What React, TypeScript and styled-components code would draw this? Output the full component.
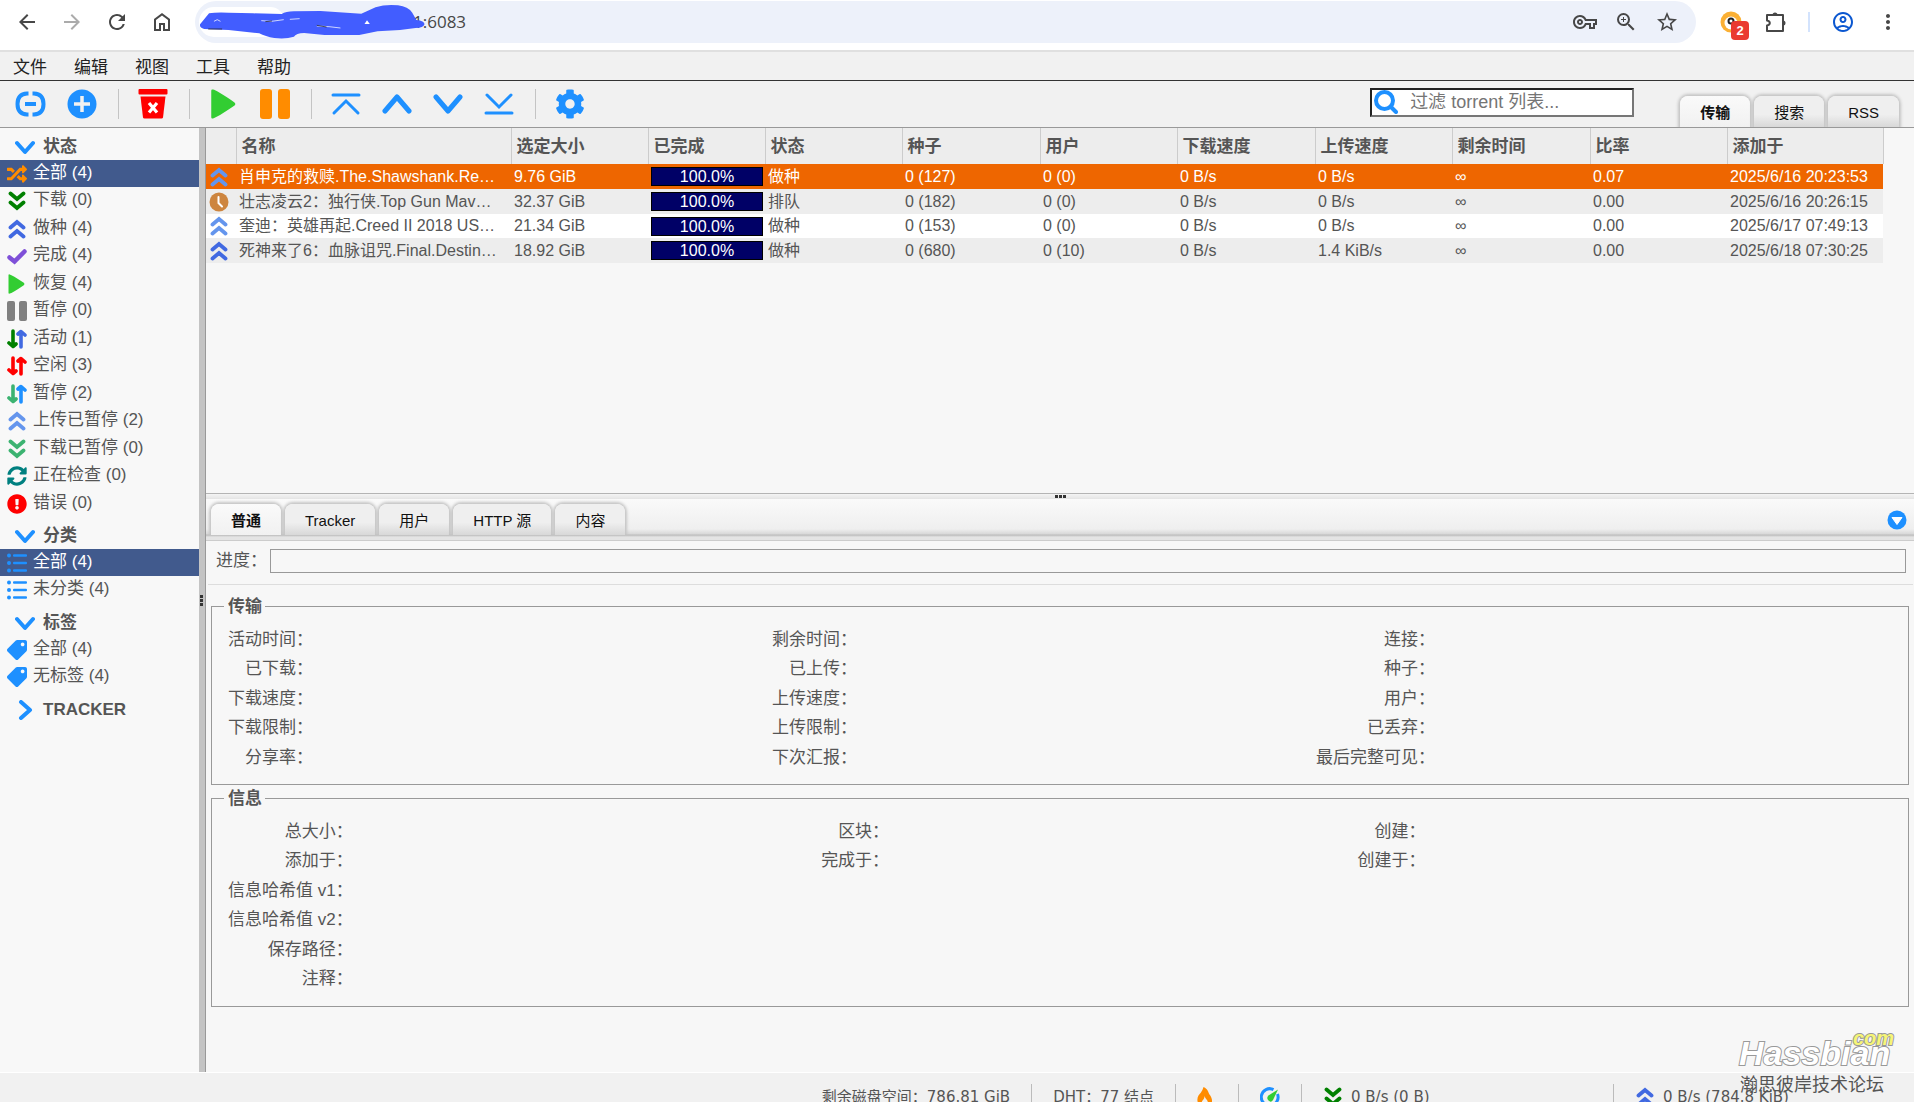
import React, { useState } from "react";
import styled, { createGlobalStyle, css } from "styled-components";
import {
  MdArrowBack,
  MdArrowForward,
  MdRefresh,
  MdOutlineVpnKey,
  MdZoomIn,
  MdStarOutline,
  MdOutlineAccountCircle,
  MdMoreVert,
} from "react-icons/md";
import { FaRandom, FaSyncAlt, FaExclamationCircle, FaTag, FaCog } from "react-icons/fa";

const sans = '"Liberation Sans", "Noto Sans CJK SC", sans-serif';
const blue = "#1e90ff";

const Global = createGlobalStyle`
  *, *::before, *::after { box-sizing: border-box; }
  body { margin: 0; background: #f7f7f7; color: #555; font: 17px/20px ${sans}; }
  button { border: 0; padding: 0; margin: 0; background: none; color: inherit; font: inherit; cursor: pointer; }
  a { color: inherit; text-decoration: none; }
  ul, h2, dl, dd, dt { margin: 0; padding: 0; list-style: none; font: inherit; }
  svg { display: block; flex: none; }
`;

/* ---------- icons ---------- */

const Chevron = ({ dir, size = 20, color = blue }: { dir: "up" | "down" | "right"; size?: number; color?: string }) => {
  const points = { up: "3,15 10,5 17,15", down: "2,6 10,15 18,6", right: "6,2 15,10 6,18" }[dir];
  return (
    <svg width={size} height={size} viewBox="0 0 20 20" fill="none" stroke={color} strokeWidth="4" strokeLinecap="round" strokeLinejoin="round">
      <polyline points={points} />
    </svg>
  );
};

const BigChevron = ({ up }: { up?: boolean }) => (
  <svg width="30" height="30" viewBox="0 0 30 30" fill="none" stroke={blue} strokeWidth="5" strokeLinecap="round" strokeLinejoin="round">
    <polyline points={up ? "3,22 15,8 27,22" : "3,8 15,22 27,8"} />
  </svg>
);

const EdgeChevron = ({ up }: { up?: boolean }) => (
  <svg width="30" height="30" viewBox="0 0 30 30" fill="none" stroke={blue} strokeWidth="3" strokeLinecap="round">
    {up ? <path d="M2 6h26M3 24 15 12l12 12" /> : <path d="M2 24h26M3 6l12 12L27 6" />}
  </svg>
);

const Double = ({ up, color, size = 20 }: { up?: boolean; color: string; size?: number }) => (
  <svg width={size} height={size} viewBox="0 0 20 20" fill="none" stroke={color} strokeWidth="3.8" strokeLinecap="round">
    {up ? (
      <path d="M3.5 8.5 10 3l6.500 5.500M3.500 17.500 10 12l6.500 5.500" />
    ) : (
      <path d="M3.500 2.500 10 8l6.500-5.500M3.500 11.500 10 17l6.500-5.500" />
    )}
  </svg>
);

const Traffic = ({ left, right }: { left: string; right: string }) => (
  <svg width="20" height="20" viewBox="0 0 20 20" fill="none" strokeWidth="3.6" strokeLinecap="round" strokeLinejoin="round">
    <path stroke={left} d="M6 2v15M2 14 6 17.500 9 15" />
    <path stroke={right} d="M14 18V3M11 5 14 2.500 18 6" />
  </svg>
);

const Check = () => (
  <svg width="20" height="20" viewBox="0 0 20 20" fill="none" stroke="#7f50d8" strokeWidth="4.500" strokeLinecap="round">
    <path d="M2.500 11.500 7.500 15.500 17.500 5.500" />
  </svg>
);

const Play = ({ size }: { size: number }) => (
  <svg width={size} height={size} viewBox="0 0 20 20" fill="#32cd32">
    <path d="M1.500 1.200Q1.500 0 2.700.400 5 .800 16.800 8.800 18.300 10 16.800 11.200 5 19.200 2.700 19.600 1.500 20 1.500 18.800Z" />
  </svg>
);

const Pause = ({ size, color }: { size: number; color: string }) => (
  <svg width={size} height={size} viewBox="0 0 20 20" fill={color}>
    <rect x="0" y="0" width="8" height="20" rx="2" />
    <rect x="12" y="0" width="8" height="20" rx="2" />
  </svg>
);

const Rows = () => (
  <svg width="20" height="20" viewBox="0 0 20 20" fill={blue}>
    <circle cx="2" cy="2.500" r="2" /><circle cx="2" cy="10" r="2" /><circle cx="2" cy="17.500" r="2" />
    <rect x="6" y="1.200" width="14" height="2.600" rx="1" /><rect x="6" y="8.700" width="14" height="2.600" rx="1" /><rect x="6" y="16.200" width="14" height="2.600" rx="1" />
  </svg>
);

const MirroredTag = styled(FaTag)`transform: scaleX(-1);`;
const Tag = () => <MirroredTag size={20} color={blue} />;

const LinkIcon = () => (
  <svg width="31" height="30" viewBox="0 0 31 30" fill="none" stroke={blue} strokeWidth="4">
    <path d="M13.500 4.500H12Q2.500 5 2.500 15T12 25.500h1.500M17.500 4.500H19Q28.500 5 28.500 15T19 25.500h-1.500" />
    <path d="M10 15h11" />
  </svg>
);

const PlusIcon = () => (
  <svg width="30" height="30" viewBox="0 0 30 30">
    <circle cx="15" cy="15" r="14.500" fill={blue} />
    <path d="M15 7v16M7 15h16" stroke="#f1f1f1" strokeWidth="3.500" />
  </svg>
);

const TrashIcon = () => (
  <svg width="30" height="30" viewBox="0 0 30 30" fill="#f00">
    <rect x="0.500" y="0" width="29" height="5.500" rx="1" />
    <path d="M2.500 7.500h25l-2.500 21q-.200 1-1.500 1h-17q-1.300 0-1.500-1z" />
    <path d="m11 14 8 9.500m0-9.500-8 9.500" stroke="#fff" strokeWidth="3.200" />
  </svg>
);

const SearchIcon = () => (
  <svg width="24" height="24" viewBox="0 0 24 24" fill="none" stroke={blue} strokeWidth="4" strokeLinecap="round">
    <circle cx="10.500" cy="10.500" r="8.500" />
    <path d="m17 17 5 5" />
  </svg>
);

const Clock = () => (
  <svg width="20" height="20" viewBox="0 0 20 20">
    <circle cx="10" cy="10" r="9.500" fill="#cd853f" />
    <path d="M9.500 5v6l3.500 3.500" fill="none" stroke="#fff" strokeWidth="2" strokeLinecap="round" />
  </svg>
);

const Flame = () => (
  <svg width="16" height="20" viewBox="0 0 16 20">
    <path fill="#ff8c00" d="M6.500 0C11 2 11 5 12.500 7.500 17 13 15.500 20 8 20S-1 13 1.500 8.500C3 6.500 5 5 6.500 0Z" />
    <path fill="#f1f1f1" d="M7.500 9c.500 3 4 4 3.500 8q-.500 3-3 3t-3.500-3C4.500 13 7.500 13 7.500 9Z" />
  </svg>
);

const Gauge = () => (
  <svg width="20" height="20" viewBox="0 0 20 20" fill="none">
    <path d="M13.500 2.600A8.400 8.400 0 1 0 17.500 7" stroke={blue} strokeWidth="3" />
    <path d="M18 2.500 8.500 8.500q-2.500 2.500 0 5t4.500-.500Z" fill="#32cd32" />
  </svg>
);

const HomeIcon = () => (
  <svg width="24" height="24" viewBox="0 -960 960 960" fill="#474747">
    <path d="M240-200h120v-240h240v240h120v-360L480-740 240-560v360Zm-80 80v-480l320-240 320 240v480H520v-240h-80v240H160Z" />
  </svg>
);

const PuzzleIcon = () => (
  <svg width="24" height="24" viewBox="0 0 24 24" fill="none" stroke="#474747" strokeWidth="2" strokeLinejoin="round">
    <path d="M4 5h16v16H4v-5.500q2.800-.500 2.800-2.500T4 10.500Z" />
    <path d="M9.500 5a2.500 2.500 0 0 1 5 0ZM20 10.500a2.500 2.500 0 0 1 0 5Z" fill="#474747" stroke="none" />
  </svg>
);

const ExtensionFace = () => (
  <svg width="22" height="22" viewBox="0 0 22 22">
    <circle cx="11" cy="11" r="10.500" fill="#fbb034" />
    <circle cx="11" cy="12" r="6.500" fill="#fff" />
    <circle cx="11" cy="10" r="2.500" fill="none" stroke="#222" strokeWidth="2" />
  </svg>
);

const CollapseIcon = () => (
  <svg width="20" height="20" viewBox="0 0 20 20">
    <circle cx="10" cy="10" r="9.500" fill={blue} />
    <path d="M5 7.500h10L10 14.500z" fill="#fff" stroke="#fff" strokeLinejoin="round" />
  </svg>
);

/* ---------- browser bar ---------- */

const Page = styled.div`
  display: flex;
  flex-direction: column;
  height: 100vh;
  overflow: hidden;
`;

const BrowserBar = styled.header`
  display: flex;
  align-items: center;
  height: 52px;
  padding: 1px 14px 8px 15px;
  background: #fff;
  border-bottom: 2px solid #e0e0e0;
  color: #474747;
`;

const NavButtons = styled.div`
  display: flex;
  gap: 21px;
  margin-right: 21px;
`;

const BarButton = styled.button<{ $faded?: boolean; $accent?: boolean }>`
  color: ${(p) => (p.$faded ? "#ababab" : p.$accent ? "#0b57d0" : "#474747")};
  position: relative;
`;

const AddressBar = styled.div`
  flex: 1;
  display: flex;
  align-items: center;
  height: 42px;
  padding: 0 17px 0 4px;
  border-radius: 21px;
  background: #edf1fa;
`;

const SiteChip = styled.span`
  width: 86px;
  height: 30px;
  border-radius: 15px;
  background: #fff;
  margin-right: 128px;
`;

const Address = styled.span`
  flex: 1;
  font: 17px/24px "Open Sans", "Noto Sans", sans-serif;
`;

const Scribble = styled.svg`
  position: absolute;
  left: 196px;
  top: 0;
`;

const AddressActions = styled.div`
  display: flex;
  gap: 17px;
`;

const Extensions = styled.div`
  display: flex;
  align-items: center;
  gap: 21px;
  margin-left: 24px;
`;

const Badge = styled.span`
  position: absolute;
  left: 11px;
  top: 10px;
  width: 18px;
  height: 19px;
  border-radius: 4px;
  background: #ea3b30;
  color: #fff;
  font: bold 13px/19px ${sans};
  text-align: center;
`;

const BarDivider = styled.span`
  width: 2px;
  height: 20px;
  background: #d3e3fd;
`;

/* ---------- menu and toolbar ---------- */

const MenuBar = styled.nav`
  display: flex;
  align-items: center;
  gap: 27px;
  height: 29px;
  padding: 3px 13px 0;
  background: #f1f1f1;
  border-bottom: 1px solid #333;
  color: #222;
`;

const Toolbar = styled.div`
  display: flex;
  align-items: center;
  height: 47px;
  padding: 0 6px 0 15px;
  background: #f1f1f1;
  border-bottom: 1px solid #999;
`;

const ToolGroup = styled.div`
  display: flex;
  gap: 21px;
  padding-right: 21px;
  & + & {
    padding-left: 19px;
    border-left: 1px solid #c4c4c4;
  }
`;

const ToolSpace = styled.div`flex: 1;`;

const SearchBox = styled.label`
  display: flex;
  align-items: center;
  gap: 12px;
  width: 264px;
  height: 29px;
  padding: 0 2px;
  margin: 0 40px 4px 0;
  background: #fff;
  border: 2px solid;
  border-color: #222 #767676 #767676 #222;
`;

const SearchInput = styled.input`
  flex: 1;
  min-width: 0;
  padding: 0;
  border: 0;
  outline: 0;
  background: none;
  font: 18px/24px ${sans};
  &::placeholder { color: #757575; }
`;

const TabRow = styled.div`
  display: flex;
  align-items: flex-end;
  align-self: flex-end;
  gap: 4px;
  padding: 0 9px 0 6px;
`;

const Tab = styled.button<{ $active?: boolean }>`
  height: 31px;
  padding: 2px 20px 0;
  border-radius: 8px 8px 0 0;
  font-size: 15px;
  font-weight: ${(p) => (p.$active ? "bold" : "normal")};
  color: #111;
  background: ${(p) => (p.$active ? "linear-gradient(#fafafa, #f1f1f1)" : "linear-gradient(#efefef 60%, #d8d8d8)")};
  box-shadow: 0 0 3px 2px #c4c4c4;
  clip-path: inset(-5px -5px 0 -5px);
`;

/* ---------- sidebar ---------- */

const Body = styled.div`
  flex: 1;
  min-height: 0;
  display: flex;
`;

const Sidebar = styled.aside`
  width: 199px;
  padding-top: 5px;
  background: #f8f8f8;
`;

const Grip = styled.div`
  display: flex;
  flex-direction: column;
  justify-content: center;
  gap: 1px;
  width: 7px;
  padding-left: 1px;
  background: #c4c4c4;
  border-right: 1px solid #999;
`;

const GripDot = styled.span`
  width: 3px;
  height: 3px;
  background: #333;
`;

const Section = styled.section`
  & + & { padding-top: 5px; }
`;

const SectionTitle = styled.button`
  display: flex;
  align-items: center;
  gap: 8px;
  height: 27px;
  padding: 0 15px;
  font-weight: bold;
`;

const Filter = styled.a<{ $selected?: boolean }>`
  display: flex;
  align-items: center;
  gap: 6px;
  height: 27px;
  padding-left: 7px;
  li:nth-child(even) > & { height: 28px; }
  ${(p) =>
    p.$selected &&
    css`
      background: #415a8d;
      color: #fff;
    `}
`;

const FilterText = styled.span`
  padding-bottom: 2px;
`;

/* ---------- torrent list ---------- */

const Main = styled.main`
  flex: 1;
  min-width: 0;
  display: flex;
  flex-direction: column;
`;

const ListPane = styled.div`
  flex: 0 0 366px;
  overflow: hidden;
  border-bottom: 1px solid #b4b4b4;
`;

const Torrents = styled.table`
  table-layout: fixed;
  width: 1677px;
  border-collapse: collapse;
`;

const HeadCell = styled.th`
  height: 36px;
  padding: 2px 5px 0;
  border-right: 1px solid #ccc;
  background: #ededed;
  text-align: left;
  font-weight: bold;
`;

const Row = styled.tr<{ $selected?: boolean }>`
  height: 25px;
  background: #fff;
  &:nth-child(even) { background: #ededed; }
  &:nth-child(3) { height: 24px; }
  ${(p) => p.$selected && css`background: #ee6600; color: #fff;`}
`;

const Cell = styled.td`
  padding: 0 0 0 3px;
  font-size: 16px;
  white-space: nowrap;
  overflow: hidden;
`;

const Done = styled.div`
  width: 112px;
  height: 19px;
  border: 1px solid #000;
  background: #000066;
  color: #fff;
  line-height: 17px;
  text-align: center;
`;

/* ---------- properties ---------- */

const Splitter = styled.div`
  display: flex;
  align-items: center;
  justify-content: center;
  gap: 1px;
  height: 5px;
  background: linear-gradient(#f4f4f4, #e4e4e4);
`;

const PropertyTabs = styled.div`
  display: flex;
  align-items: flex-end;
  justify-content: space-between;
  height: 42px;
  padding-right: 7px;
  background: linear-gradient(#fafafa 0, #efefef 30px, #d8d8d8 35px, #bbb 36px, #e4e4e4 38px);
  border-bottom: 1px solid #ccc;
`;

const PropertyTabRow = styled(TabRow)`
  padding: 0 0 5px 5px;
`;

const Collapse = styled.button`
  margin-bottom: 10px;
`;

const ProgressRow = styled.div`
  display: flex;
  align-items: center;
  gap: 3px;
  height: 44px;
  margin: 0 1px 0 2px;
  padding: 0 7px 4px 8px;
  border-bottom: 1px solid #ddd;
`;

const ProgressTrack = styled.div`
  flex: 1;
  height: 24px;
  border: 1px solid #999;
`;

const Groups = styled.div`
  padding-top: 10px;
`;

const Group = styled.fieldset`
  margin: 0 5px 2px;
  padding: 9px 14px 11px 16px;
  border: 1px solid #999;
`;

const Legend = styled.legend`
  margin-left: -4px;
  padding: 2px 3px 0 4px;
  font-weight: bold;
`;

const Details = styled.dl`
  display: grid;
  grid-template-columns: auto 1fr auto 1fr auto 1fr;
  grid-auto-rows: 30px;
  grid-template-rows: 29px 30px 29px 30px 29px;
  line-height: 28px;
`;

const Term = styled.dt`
  text-align: right;
`;

/* ---------- status bar ---------- */

const StatusBar = styled.footer`
  display: flex;
  justify-content: flex-end;
  height: 30px;
  padding-top: 11px;
  overflow: hidden;
  background: #f1f1f1;
  border-top: 1px solid #fff;
  font: 15px/26px "DejaVu Sans", "Noto Sans CJK SC", sans-serif;
`;

const StatusItem = styled.span<{ $width?: number }>`
  display: flex;
  align-items: center;
  gap: 8px;
  height: 26px;
  min-width: ${(p) => (p.$width ? p.$width + "px" : "auto")};
  padding: 0 21px;
  white-space: nowrap;
  & + & { border-left: 1px solid #bbb; }
`;

const Watermark = styled.div`
  position: absolute;
  right: 26px;
  bottom: 4px;
  display: flex;
  flex-direction: column;
  width: 149px;
  pointer-events: none;
`;

const Brand = styled.span`
  position: relative;
  font: italic bold 34px/38px ${sans};
  color: #fff;
  -webkit-text-stroke: 2px #999;
  paint-order: stroke fill;
`;

const BrandSuffix = styled.span`
  position: absolute;
  right: -6px;
  top: -15px;
  font-size: 20px;
  color: #f6f576;
`;

const BrandLine = styled.span`
  padding-left: 1px;
  font: 18px/26px ${sans};
  color: #555;
  white-space: nowrap;
`;

/* ---------- data ---------- */

const statusFilters = [
  { label: "全部", count: 4, icon: <FaRandom size={20} color="#ff8c00" /> },
  { label: "下载", count: 0, icon: <Double color="#008000" /> },
  { label: "做种", count: 4, icon: <Double up color="#4169e1" /> },
  { label: "完成", count: 4, icon: <Check /> },
  { label: "恢复", count: 4, icon: <Play size={20} /> },
  { label: "暂停", count: 0, icon: <Pause size={20} color="#808080" /> },
  { label: "活动", count: 1, icon: <Traffic left="#008000" right="#4169e1" /> },
  { label: "空闲", count: 3, icon: <Traffic left="#f00" right="#f00" /> },
  { label: "暂停", count: 2, icon: <Traffic left="#3cb371" right={blue} /> },
  { label: "上传已暂停", count: 2, icon: <Double up color="#6495ed" /> },
  { label: "下载已暂停", count: 0, icon: <Double color="#3cb371" /> },
  { label: "正在检查", count: 0, icon: <FaSyncAlt size={20} color="#008080" /> },
  { label: "错误", count: 0, icon: <FaExclamationCircle size={20} color="#f00" /> },
];

const categoryFilters = [
  { label: "全部", count: 4, icon: <Rows /> },
  { label: "未分类", count: 4, icon: <Rows /> },
];

const tagFilters = [
  { label: "全部", count: 4, icon: <Tag /> },
  { label: "无标签", count: 4, icon: <Tag /> },
];

const columns: [string, number][] = [
  ["", 30], ["名称", 275], ["选定大小", 137], ["已完成", 117], ["状态", 137], ["种子", 138], ["用户", 137],
  ["下载速度", 138], ["上传速度", 137], ["剩余时间", 138], ["比率", 137], ["添加于", 156],
];

const torrents = [
  { icon: <Double up color="#6495ed" />, name: "肖申克的救赎.The.Shawshank.Re…", size: "9.76 GiB", state: "做种", seeds: "0 (127)", peers: "0 (0)", up: "0 B/s", ratio: "0.07", added: "2025/6/16 20:23:53" },
  { icon: <Clock />, name: "壮志凌云2：独行侠.Top Gun Mav…", size: "32.37 GiB", state: "排队", seeds: "0 (182)", peers: "0 (0)", up: "0 B/s", ratio: "0.00", added: "2025/6/16 20:26:15" },
  { icon: <Double up color="#6495ed" />, name: "奎迪：英雄再起.Creed II 2018 US…", size: "21.34 GiB", state: "做种", seeds: "0 (153)", peers: "0 (0)", up: "0 B/s", ratio: "0.00", added: "2025/6/17 07:49:13" },
  { icon: <Double up color="#4169e1" />, name: "死神来了6：血脉诅咒.Final.Destin…", size: "18.92 GiB", state: "做种", seeds: "0 (680)", peers: "0 (10)", up: "1.4 KiB/s", ratio: "0.00", added: "2025/6/18 07:30:25" },
];

const transferTerms = [
  "活动时间", "剩余时间", "连接",
  "已下载", "已上传", "种子",
  "下载速度", "上传速度", "用户",
  "下载限制", "上传限制", "已丢弃",
  "分享率", "下次汇报", "最后完整可见",
];

const infoTerms = [
  "总大小", "区块", "创建",
  "添加于", "完成于", "创建于",
  "信息哈希值 v1", "", "",
  "信息哈希值 v2", "", "",
  "保存路径", "", "",
  "注释",
];

/* ---------- parts ---------- */

type FilterItem = { label: string; count: number; icon: React.ReactNode };

const FilterSection = ({ title, items, initial }: { title: string; items: FilterItem[]; initial: number }) => {
  const [open, setOpen] = useState(items.length > 0);
  const [selected, setSelected] = useState(initial);
  return (
    <Section>
      <SectionTitle onClick={() => setOpen(!open)}>
        <Chevron dir={open ? "down" : "right"} />
        {title}
      </SectionTitle>
      {open && (
        <ul>
          {items.map((item, i) => (
            <li key={i}>
              <Filter href="#" $selected={selected === i} onClick={() => setSelected(i)}>
                {item.icon}
                <FilterText>{item.label} ({item.count})</FilterText>
              </Filter>
            </li>
          ))}
        </ul>
      )}
    </Section>
  );
};

const DetailGroup = ({ title, terms }: { title: string; terms: string[] }) => (
  <Group>
    <Legend>{title}</Legend>
    <Details>
      {terms.map((term, i) => (
        <React.Fragment key={i}>
          <Term>{term && term + "："}</Term>
          <dd />
        </React.Fragment>
      ))}
    </Details>
  </Group>
);

const Tabs = ({ names, as: Wrap = TabRow }: { names: string[]; as?: any }) => {
  const [active, setActive] = useState(0);
  return (
    <Wrap>
      {names.map((name, i) => (
        <Tab key={name} $active={active === i} onClick={() => setActive(i)}>{name}</Tab>
      ))}
    </Wrap>
  );
};

export default function App() {
  return (
    <Page>
      <Global />
      <BrowserBar>
        <NavButtons>
          <BarButton aria-label="Back"><MdArrowBack size={24} /></BarButton>
          <BarButton aria-label="Forward" $faded><MdArrowForward size={24} /></BarButton>
          <BarButton aria-label="Reload"><MdRefresh size={24} /></BarButton>
          <BarButton aria-label="Home"><HomeIcon /></BarButton>
        </NavButtons>
        <AddressBar>
          <SiteChip />
          <Address>1:6083</Address>
          <AddressActions>
            <BarButton aria-label="Passwords"><MdOutlineVpnKey size={24} /></BarButton>
            <BarButton aria-label="Zoom"><MdZoomIn size={24} /></BarButton>
            <BarButton aria-label="Bookmark"><MdStarOutline size={24} /></BarButton>
          </AddressActions>
        </AddressBar>
        <Extensions>
          <BarButton aria-label="Extension">
            <ExtensionFace />
            <Badge>2</Badge>
          </BarButton>
          <BarButton aria-label="Extensions"><PuzzleIcon /></BarButton>
          <BarDivider />
          <BarButton aria-label="Profile" $accent><MdOutlineAccountCircle size={24} /></BarButton>
          <BarButton aria-label="More"><MdMoreVert size={24} /></BarButton>
        </Extensions>
        <Scribble width="233" height="43" viewBox="480 0 571 129" preserveAspectRatio="none">
          <path fill="#425dff" d="M490 73 512 40Q530 36 560 38L620 40 690 42Q700 34 720 34L785 33 885 41 920 22Q945 12 975 16 1000 20 1010 38L1020 60Q1040 62 1040 73 1038 84 1018 84L980 90 925 94 880 105 795 105 745 99Q725 100 720 110 700 118 672 114 650 110 635 100L560 90 500 87Q488 84 490 73Z" />
          <path stroke="#fff" strokeWidth="2" fill="none" d="m640 62 25 2 30-5m15-1 24-2m42 22 30 2 28 4M524 64l8-5 8 5" />
          <path fill="#fff" d="m893 72 6-11 7 11z" />
          <path stroke="#222" strokeWidth="2" fill="none" d="m650 65 16-2m110 13 24 5m-290 6h34" />
        </Scribble>
      </BrowserBar>

      <MenuBar>
        {["文件", "编辑", "视图", "工具", "帮助"].map((name) => (
          <button key={name}>{name}</button>
        ))}
      </MenuBar>

      <Toolbar>
        <ToolGroup>
          <button aria-label="Add link"><LinkIcon /></button>
          <button aria-label="Add file"><PlusIcon /></button>
        </ToolGroup>
        <ToolGroup>
          <button aria-label="Delete"><TrashIcon /></button>
        </ToolGroup>
        <ToolGroup>
          <button aria-label="Resume"><Play size={30} /></button>
          <button aria-label="Pause"><Pause size={30} color="#ff8c00" /></button>
        </ToolGroup>
        <ToolGroup>
          <button aria-label="Top of queue"><EdgeChevron up /></button>
          <button aria-label="Up in queue"><BigChevron up /></button>
          <button aria-label="Down in queue"><BigChevron /></button>
          <button aria-label="Bottom of queue"><EdgeChevron /></button>
        </ToolGroup>
        <ToolGroup>
          <button aria-label="Options"><FaCog size={30} color={blue} /></button>
        </ToolGroup>
        <ToolSpace />
        <SearchBox>
          <SearchIcon />
          <SearchInput aria-label="过滤" placeholder="过滤 torrent 列表..." />
        </SearchBox>
        <Tabs names={["传输", "搜索", "RSS"]} />
      </Toolbar>

      <Body>
        <Sidebar>
          <FilterSection title="状态" items={statusFilters} initial={0} />
          <FilterSection title="分类" items={categoryFilters} initial={0} />
          <FilterSection title="标签" items={tagFilters} initial={-1} />
          <FilterSection title="TRACKER" items={[]} initial={-1} />
        </Sidebar>
        <Grip><GripDot /><GripDot /><GripDot /></Grip>
        <Main>
          <ListPane>
            <Torrents>
              <colgroup>
                {columns.map(([name, width]) => <col key={name} style={{ width }} />)}
              </colgroup>
              <thead>
                <tr>{columns.map(([name]) => <HeadCell key={name}>{name}</HeadCell>)}</tr>
              </thead>
              <tbody>
                {torrents.map((t, i) => (
                  <Row key={i} $selected={i === 0}>
                    <Cell>{t.icon}</Cell>
                    <Cell>{t.name}</Cell>
                    <Cell>{t.size}</Cell>
                    <Cell><Done>100.0%</Done></Cell>
                    <Cell>{t.state}</Cell>
                    <Cell>{t.seeds}</Cell>
                    <Cell>{t.peers}</Cell>
                    <Cell>0 B/s</Cell>
                    <Cell>{t.up}</Cell>
                    <Cell>∞</Cell>
                    <Cell>{t.ratio}</Cell>
                    <Cell>{t.added}</Cell>
                  </Row>
                ))}
              </tbody>
            </Torrents>
          </ListPane>
          <Splitter><GripDot /><GripDot /><GripDot /></Splitter>
          <PropertyTabs>
            <Tabs as={PropertyTabRow} names={["普通", "Tracker", "用户", "HTTP 源", "内容"]} />
            <Collapse aria-label="Collapse"><CollapseIcon /></Collapse>
          </PropertyTabs>
          <ProgressRow>
            进度：
            <ProgressTrack />
          </ProgressRow>
          <Groups>
            <DetailGroup title="传输" terms={transferTerms} />
            <DetailGroup title="信息" terms={infoTerms} />
          </Groups>
        </Main>
      </Body>

      <StatusBar>
        <StatusItem>剩余磁盘空间：786.81 GiB</StatusItem>
        <StatusItem>DHT：77 结点</StatusItem>
        <StatusItem $width={63}><Flame /></StatusItem>
        <StatusItem><Gauge /></StatusItem>
        <StatusItem $width={312}><Double color="#008000" />0 B/s (0 B)</StatusItem>
        <StatusItem $width={301}><Double up color="#4169e1" />0 B/s (784.8 KiB)</StatusItem>
      </StatusBar>

      <Watermark>
        <Brand>Hassbian<BrandSuffix>com</BrandSuffix></Brand>
        <BrandLine>瀚思彼岸技术论坛</BrandLine>
      </Watermark>
    </Page>
  );
}
